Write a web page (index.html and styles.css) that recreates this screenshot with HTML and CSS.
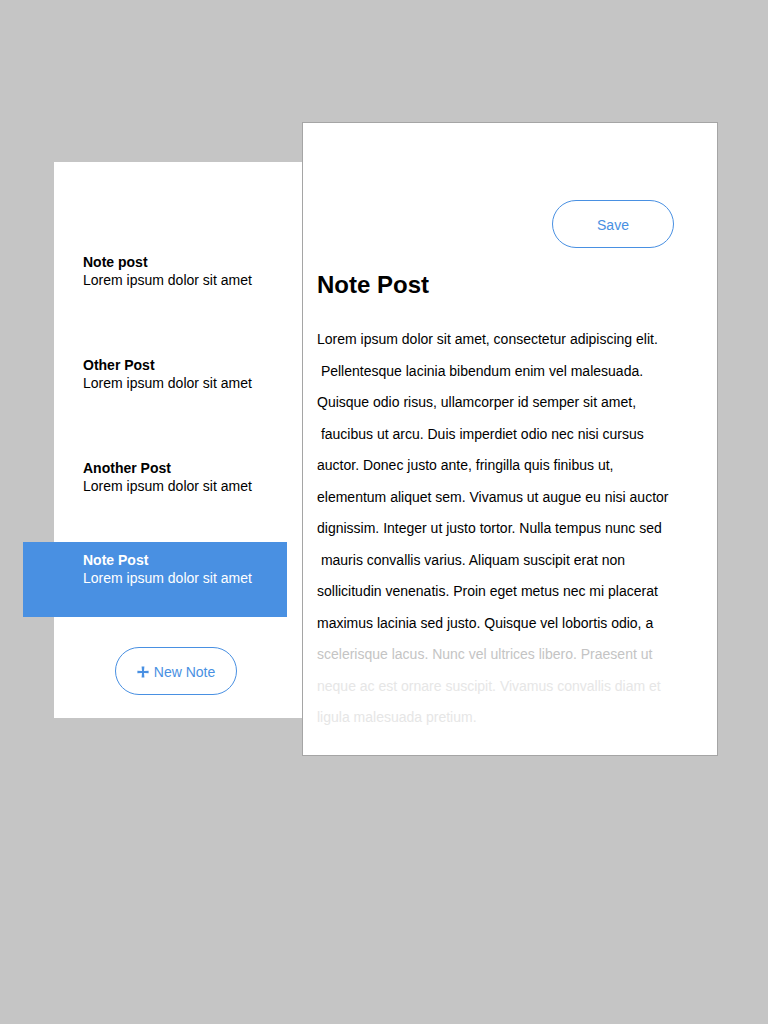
FILE: index.html
```html
<!DOCTYPE html>
<html lang="en">
<head>
<meta charset="utf-8">
<meta name="viewport" content="width=device-width, initial-scale=1">
<title>Notes</title>
<link rel="stylesheet" href="styles.css">
</head>
<body>
<div class="app">
  <nav class="sidebar" aria-label="Notes">
    <ul class="notes">
      <li><a class="note" href="#1"><strong class="note-title">Note post</strong><span>Lorem ipsum dolor sit amet</span></a></li>
      <li><a class="note" href="#2"><strong class="note-title">Other Post</strong><span>Lorem ipsum dolor sit amet</span></a></li>
      <li><a class="note" href="#3"><strong class="note-title">Another Post</strong><span>Lorem ipsum dolor sit amet</span></a></li>
      <li class="current"><a class="note note-selected" href="#4" aria-current="page"><strong class="note-title">Note Post</strong><span>Lorem ipsum dolor sit amet</span></a></li>
    </ul>
    <button class="pill new-note" type="button">
      <svg class="plus" viewBox="0 0 12 12" aria-hidden="true"><path d="M4.6 0.4H7.4L7 5L11.6 4.7V7.3L7 7L7.4 11.6H4.6L5 7L0.4 7.3V4.7L5 5Z"/></svg>
      <span>New Note</span>
    </button>
  </nav>
  <main class="editor">
    <button class="pill save" type="button">Save</button>
    <h1 class="title">Note Post</h1>
    <div class="lines">
      <span>Lorem ipsum dolor sit amet, consectetur adipiscing elit.</span>
      <span>&nbsp;Pellentesque lacinia bibendum enim vel malesuada.</span>
      <span>Quisque odio risus, ullamcorper id semper sit amet,</span>
      <span>&nbsp;faucibus ut arcu. Duis imperdiet odio nec nisi cursus</span>
      <span>auctor. Donec justo ante, fringilla quis finibus ut,</span>
      <span>elementum aliquet sem. Vivamus ut augue eu nisi auctor</span>
      <span>dignissim. Integer ut justo tortor. Nulla tempus nunc sed</span>
      <span>&nbsp;mauris convallis varius. Aliquam suscipit erat non</span>
      <span>sollicitudin venenatis. Proin eget metus nec mi placerat</span>
      <span>maximus lacinia sed justo. Quisque vel lobortis odio, a</span>
      <span class="fade">scelerisque lacus. Nunc vel ultrices libero. Praesent ut</span>
      <span class="fade-more">neque ac est ornare suscipit. Vivamus convallis diam et</span>
      <span class="fade-more">ligula malesuada pretium.</span>
    </div>
  </main>
</div>
</body>
</html>
```
FILE: styles.css
```css
* { box-sizing: border-box; }

body {
  margin: 0;
  background: #c5c5c5;
  color: #000;
  font: 14px/18px "Liberation Sans", Arial, sans-serif;
}

.app {
  display: grid;
  grid-template-columns: 248px minmax(0, 1fr);
  align-items: start;
  padding: 122px 50px 40px 54px;
}

.sidebar {
  margin-top: 40px;
  padding: 82px 0 23px;
  background: #fff;
}

.notes {
  display: flex;
  flex-direction: column;
  gap: 28px;
  margin: 0;
  padding: 0;
  list-style: none;
}

.note {
  display: flex;
  flex-direction: column;
  min-height: 75px;
  padding: 9px 0 9px 29px;
  color: inherit;
  text-decoration: none;
}

/* The selected note sticks out past the left edge of the list. */
.current { margin: -11px 15px 0 -31px; }

.note-selected {
  padding-left: 60px;
  background: #4990e2;
  color: #fff;
}

.pill {
  display: flex;
  align-items: center;
  justify-content: center;
  width: 122px;
  height: 48px;
  padding: 2px 0 0;
  border: 1px solid #4990e2;
  border-radius: 24px;
  background: #fff;
  color: #4990e2;
  font: inherit;
  cursor: pointer;
}

.new-note {
  gap: 5px;
  margin: 30px 0 0 61px;
}

.plus {
  width: 12px;
  height: 12px;
  fill: currentColor;
}

.editor {
  padding: 77px 43px 22px 14px;
  border: 1px solid #a5a5a5;
  background: #fff;
}

.save { margin-left: auto; }

.title {
  margin: 23px 0 24px;
  font-size: 24px;
  line-height: 28px;
}

.lines {
  display: grid;
  grid-auto-rows: 32px 31px;
  align-items: center;
}

.fade { color: #c4c4c4; }
.fade-more { color: #e6e6e6; }
```
